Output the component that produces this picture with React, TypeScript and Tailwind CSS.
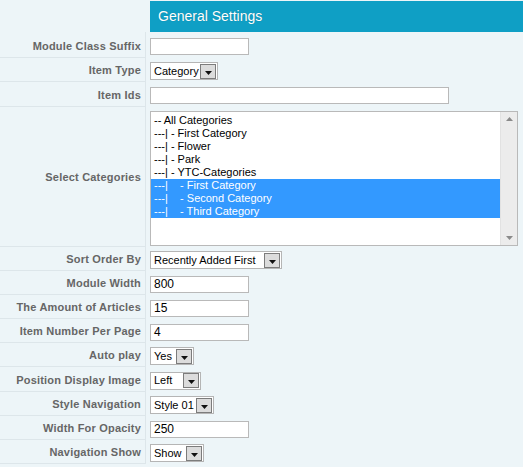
import React from "react";

type Row = { label: string; h: string; field: React.ReactNode };

function TextBox({ value = "", wide = false }: { value?: string; wide?: boolean }) {
  return (
    <div
      className={`flex h-[17px] items-center border border-[#b9b9b9] bg-white pl-[3px] text-[12px] text-black ${
        wide ? "w-[299px]" : "w-[99px]"
      }`}
    >
      {value}
    </div>
  );
}

function Drop({ value, w }: { value: string; w: string }) {
  return (
    <div className={`flex h-[18px] items-center border border-[#b5b5b5] bg-white pl-[3px] ${w}`}>
      <span className="flex-1 whitespace-nowrap text-[11px] text-black">{value}</span>
      <span className="mr-px flex h-[15px] w-[16px] items-end justify-center border border-[#7c7c7c] bg-[#dcdcdc] pb-[3px]">
        <svg width="7" height="4" viewBox="0 0 7 4">
          <path d="M0 0h7L3.5 4z" fill="#111" />
        </svg>
      </span>
    </div>
  );
}

const cats = [
  { t: "-- All Categories", sel: false },
  { t: "---| - First Category", sel: false },
  { t: "---| - Flower", sel: false },
  { t: "---| - Park", sel: false },
  { t: "---| - YTC-Categories", sel: false },
  { t: "---|    - First Category", sel: true },
  { t: "---|    - Second Category", sel: true },
  { t: "---|    - Third Category", sel: true },
];

function ListBox() {
  return (
    <div className="flex h-[135px] w-[368px] border border-[#b9b9b9] bg-white">
      <div className="flex-1 pt-[2px]">
        {cats.map((c) => (
          <div
            key={c.t}
            className={`h-[13px] whitespace-pre pl-[3px] text-[11px] leading-[13px] ${
              c.sel ? "bg-[#3399ff] text-white" : "text-black"
            }`}
          >
            {c.t}
          </div>
        ))}
      </div>
      <div className="flex w-[17px] flex-col items-center justify-between border-l border-[#e2e2e2] bg-[#ececec] py-[5px]">
        <svg width="7" height="4" viewBox="0 0 7 4">
          <path d="M0 4h7L3.5 0z" fill="#8a8a8a" />
        </svg>
        <svg width="7" height="4" viewBox="0 0 7 4">
          <path d="M0 0h7L3.5 4z" fill="#8a8a8a" />
        </svg>
      </div>
    </div>
  );
}

const rows: Row[] = [
  { label: "Module Class Suffix", h: "h-[26px] pt-[3px]", field: <TextBox /> },
  { label: "Item Type", h: "h-[24px] pt-[2px]", field: <Drop value="Category" w="w-[68px]" /> },
  { label: "Item Ids", h: "h-[25px] pt-[2px]", field: <TextBox wide /> },
  { label: "Select Categories", h: "h-[140px] pt-[2px]", field: <ListBox /> },
  { label: "Sort Order By", h: "h-[24px] pt-[2px]", field: <Drop value="Recently Added First" w="w-[132px]" /> },
  { label: "Module Width", h: "h-[24px] pt-[2px]", field: <TextBox value="800" /> },
  { label: "The Amount of Articles", h: "h-[24px] pt-[2px]", field: <TextBox value="15" /> },
  { label: "Item Number Per Page", h: "h-[24px] pt-[2px]", field: <TextBox value="4" /> },
  { label: "Auto play", h: "h-[24px] pt-[2px]", field: <Drop value="Yes" w="w-[44px]" /> },
  { label: "Position Display Image", h: "h-[25px] pt-[2px]", field: <Drop value="Left" w="w-[51px]" /> },
  { label: "Style Navigation", h: "h-[24px] pt-[2px]", field: <Drop value="Style 01" w="w-[64px]" /> },
  { label: "Width For Opacity", h: "h-[24px] pt-[2px]", field: <TextBox value="250" /> },
  { label: "Navigation Show", h: "h-[24px] pt-[2px]", field: <Drop value="Show" w="w-[54px]" /> },
];

export default function App() {
  return (
    <div className="h-[467px] w-[523px] overflow-hidden bg-[#edf5f8] pt-px font-['Liberation_Sans',Arial,sans-serif]">
      <div className="grid grid-cols-[146px_1fr]">
        <div />
        <div className="pl-[4px]">
          <div className="flex h-[31px] items-center bg-[#0f9fc5] pl-[8px] text-[14px] text-white [text-shadow:0_0_1px_rgba(0,0,0,0.25)]">
            General Settings
          </div>
        </div>
        {rows.map((r) => (
          <React.Fragment key={r.label}>
            <div
              className={`flex items-center justify-end border-b border-r border-[#dde6ea] pr-[4px] text-[11px] font-bold tracking-[0.2px] text-[#666] ${r.h}`}
            >
              {r.label}
            </div>
            <div className={`flex items-center pl-[4px] ${r.h}`}>{r.field}</div>
          </React.Fragment>
        ))}
      </div>
    </div>
  );
}
